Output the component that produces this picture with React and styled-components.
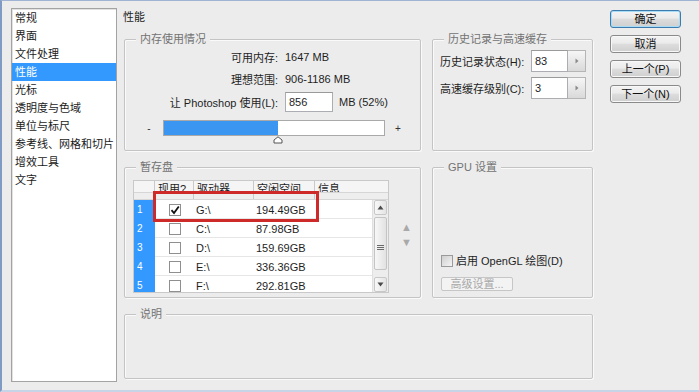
import React from 'react';
import styled, { createGlobalStyle } from 'styled-components';

const Global = createGlobalStyle`
  html, body { margin: 0; padding: 0; background: #ececec; }
  body {
    font-family: "Liberation Sans", "Noto Sans CJK SC", sans-serif;
    font-size: 11px;
    color: #1e1e1e;
  }
  * { box-sizing: border-box; }
`;

const Window = styled.div`
  width: 699px;
  height: 392px;
  display: flex;
  align-items: flex-start;
  background: #ececec;
  border-top: 1px solid #9fb4d2;
  border-left: 2px solid #7f9bc3;
  border-bottom: 2px solid #c5d4e6;
  padding: 7px 0 0 9px;
  overflow: hidden;
`;

const Sidebar = styled.ul`
  list-style: none;
  margin: 0;
  padding: 0;
  width: 106px;
  height: 374px;
  background: #fff;
  border: 1px solid #a3a3a3;
  box-shadow: inset 1px 1px 0 #e2e2e2;
`;

const NavItem = styled.li`
  height: 18px;
  line-height: 18px;
  padding-left: 3px;
  white-space: nowrap;
  color: ${p => (p.$active ? '#fff' : '#1a1a1a')};
  background: ${p => (p.$active ? '#3399ff' : 'transparent')};
`;

const Main = styled.div`
  width: 476px;
  padding-left: 6px;
`;

const Title = styled.div`
  line-height: 18px;
  height: 18px;
`;

const Groups = styled.div`
  margin: 13px 0 0 1px;
  display: grid;
  grid-template-columns: 297px 161px;
  grid-template-rows: 112px 131px 65px;
  column-gap: 11px;
  row-gap: 16px;
`;

const Group = styled.div`
  position: relative;
  border: 1px solid #c4c4c4;
  border-radius: 2px;
  box-shadow: inset 1px 1px 0 #fafafa, 1px 1px 0 #fafafa;
  grid-column: ${p => (p.$span ? '1 / -1' : 'auto')};
`;

const Legend = styled.span`
  position: absolute;
  top: -8px;
  left: 11px;
  padding: 0 4px;
  line-height: 14px;
  background: #ececec;
  color: #737373;
  white-space: nowrap;
`;

const InfoGrid = styled.div`
  display: grid;
  grid-template-columns: 153px auto;
  grid-template-rows: 20px 20px 22px;
  column-gap: 7px;
  row-gap: 2px;
  align-items: center;
  padding-top: 7px;
`;

const Label = styled.span`
  text-align: ${p => (p.$right ? 'right' : 'left')};
  white-space: nowrap;
`;

const InputRow = styled.div`
  display: flex;
  align-items: center;
  gap: 6px;
`;

const TextBox = styled.input`
  width: ${p => p.$w}px;
  height: ${p => p.$h}px;
  border: 1px solid #abadb3;
  border-top-color: #9a9a9a;
  background: #fff;
  padding: 0 3px;
  margin: 0;
  font: inherit;
  color: #1e1e1e;
  outline: none;
`;

const SliderRow = styled.div`
  display: flex;
  align-items: center;
  margin-top: 7px;
  padding-left: 17px;
`;

const Sign = styled.span`
  width: 14px;
  text-align: center;
  color: #333;
  font-size: 10px;
`;

const Track = styled.div`
  position: relative;
  width: 222px;
  height: 16px;
  margin: 0 6px 0 7px;
  border: 1px solid #a9a9a9;
  background: #fff;
`;

const Fill = styled.div`
  height: 100%;
  width: ${p => p.$pct}%;
  background: #3b96f2;
`;

const Thumb = styled.svg`
  position: absolute;
  top: 15px;
  left: calc(${p => p.$pct}% - 5px);
`;

const HistGrid = styled.div`
  display: grid;
  grid-template-columns: 91px 55px;
  grid-auto-rows: 22px;
  row-gap: 5px;
  align-items: center;
  padding: 10px 0 0 7px;
`;

const Spin = styled.div`
  display: flex;
  height: 22px;
`;

const SpinBtn = styled.div`
  width: 18px;
  height: 22px;
  border: 1px solid #b5b5b5;
  border-left: none;
  background: linear-gradient(#f6f6f6, #d9d9d9);
  display: flex;
  align-items: center;
  justify-content: center;
`;

const ScratchBody = styled.div`
  display: flex;
  padding: 12px 0 0 8px;
`;

const Table = styled.div`
  width: 256px;
  border: 1px solid #c9c9c9;
  background: #f3f3f3;
`;

const HeadRow = styled.div`
  display: grid;
  grid-template-columns: 21px 39px 60px 61px 1fr;
  height: ${p => p.$h}px;
  overflow: hidden;
  background: ${p => p.$bg};
  border-bottom: 1px solid #d6d6d6;
`;

const HeadCell = styled.div`
  border-right: 1px solid #c9c9c9;
  padding-left: 3px;
  line-height: 17px;
  white-space: nowrap;
  &:last-child { border-right: none; }
`;

const TBody = styled.div`
  display: flex;
  height: 92px;
  background: #fff;
`;

const Rows = styled.div`
  flex: 1;
  overflow: hidden;
`;

const Row = styled.div`
  display: grid;
  grid-template-columns: 21px 39px 60px 61px 1fr;
  height: 19px;
  align-items: center;
  border-bottom: 1px solid #e6e6e6;
`;

const NumCell = styled.div`
  height: 100%;
  background: #3399ff;
  color: #fff;
  padding-left: 3px;
  line-height: 19px;
  font-size: 10px;
`;

const CheckCell = styled.div`
  display: flex;
  justify-content: center;
`;

const Box = styled.div`
  width: 12px;
  height: 12px;
  border: 1px solid ${p => (p.$shaded ? '#9a9a9a' : '#8f8f8f')};
  background: ${p => (p.$shaded ? 'linear-gradient(135deg, #cfcfcf, #f4f4f4)' : '#fff')};
  display: flex;
  align-items: center;
  justify-content: center;
`;

const Cell = styled.div`
  padding-left: 2px;
  white-space: nowrap;
`;

const Scrollbar = styled.div`
  width: 16px;
  display: flex;
  flex-direction: column;
  background: #ededed;
  border-left: 1px solid #e0e0e0;
`;

const ScrollBtn = styled.div`
  height: 15px;
  margin: 0 1px;
  border: 1px solid #c8c8c8;
  border-radius: 2px;
  background: linear-gradient(90deg, #f8f8f8, #e4e4e4);
  display: flex;
  align-items: center;
  justify-content: center;
`;

const ScrollThumb = styled.div`
  margin: 2px 1px 0;
  height: 53px;
  border: 1px solid #c4c4c4;
  border-radius: 2px;
  background: linear-gradient(90deg, #f7f7f7, #e2e2e2);
  display: flex;
  align-items: flex-end;
  justify-content: center;
  padding-bottom: 18px;
`;

const Track2 = styled.div`
  flex: 1;
`;

const Movers = styled.div`
  display: flex;
  flex-direction: column;
  padding: 40px 0 0 12px;
  color: #a9a9a9;
  font-size: 11px;
  line-height: 15px;
`;

const RedMark = styled.div`
  position: absolute;
  left: 28px;
  top: 23px;
  width: 166px;
  height: 31px;
  border: 3px solid #cf2a2a;
`;

const GpuBody = styled.div`
  height: 100%;
  display: flex;
  flex-direction: column;
  justify-content: flex-end;
  padding: 0 0 6px 8px;
`;

const CheckRow = styled.div`
  display: flex;
  align-items: center;
  gap: 3px;
  line-height: 14px;
`;

const AdvButton = styled.div`
  margin-top: 9px;
  width: 72px;
  height: 14px;
  line-height: 12px;
  border: 1px solid #c6c6c6;
  border-radius: 2px;
  background: #f3f3f3;
  color: #a8a8a8;
  text-align: center;
`;

const Buttons = styled.div`
  display: flex;
  flex-direction: column;
  gap: 7px;
  margin: 2px 0 0 17px;
`;

const Button = styled.div`
  width: 71px;
  height: 18px;
  line-height: 16px;
  text-align: center;
  border: 1px solid ${p => (p.$default ? '#3d7bad' : '#8a8a8a')};
  border-radius: 3px;
  background: linear-gradient(#f3f3f3 0%, #ebebeb 45%, #dddddd 50%, #cfcfcf 100%);
  box-shadow: inset 0 0 0 1px ${p => (p.$default ? '#a6dcf6' : '#f8f8f8')};
  color: #111;
`;

const Arrow = ({ dir }) => (
  <svg width="7" height="5" viewBox="0 0 7 5">
    <path d={dir === 'up' ? 'M0.5 4.5 L3.5 0.5 L6.5 4.5 Z' : 'M0.5 0.5 L3.5 4.5 L6.5 0.5 Z'} fill="#4a4a4a" />
  </svg>
);

const navItems = ['常规', '界面', '文件处理', '性能', '光标', '透明度与色域', '单位与标尺', '参考线、网格和切片', '增效工具', '文字'];

const disks = [
  { n: 1, on: true, d: 'G:\\', s: '194.49GB' },
  { n: 2, on: false, d: 'C:\\', s: '87.98GB' },
  { n: 3, on: false, d: 'D:\\', s: '159.69GB' },
  { n: 4, on: false, d: 'E:\\', s: '336.36GB' },
  { n: 5, on: false, d: 'F:\\', s: '292.81GB' },
];

const Check = () => (
  <svg width="10" height="10" viewBox="0 0 10 10">
    <path d="M1.5 5.2 L4 8 L8.8 1.5" stroke="#111" strokeWidth="1.8" fill="none" />
  </svg>
);

export default function App() {
  const pct = 52;
  return (
    <Window>
      <Global />
      <Sidebar>
        {navItems.map(t => (
          <NavItem key={t} $active={t === '性能'}>{t}</NavItem>
        ))}
      </Sidebar>

      <Main>
        <Title>性能</Title>
        <Groups>
          <Group>
            <Legend>内存使用情况</Legend>
            <InfoGrid>
              <Label $right>可用内存:</Label>
              <Label>1647 MB</Label>
              <Label $right>理想范围:</Label>
              <Label>906-1186 MB</Label>
              <Label $right>让 Photoshop 使用(L):</Label>
              <InputRow>
                <TextBox $w={48} $h={20} readOnly value="856" />
                <Label>MB (52%)</Label>
              </InputRow>
            </InfoGrid>
            <SliderRow>
              <Sign>-</Sign>
              <Track>
                <Fill $pct={pct} />
                <Thumb $pct={pct} width="10" height="8" viewBox="0 0 10 8">
                  <path d="M1 7 L1 4 L5 0.8 L9 4 L9 7 Z" fill="#fff" stroke="#555" strokeWidth="1" />
                </Thumb>
              </Track>
              <Sign>+</Sign>
            </SliderRow>
          </Group>

          <Group>
            <Legend>历史记录与高速缓存</Legend>
            <HistGrid>
              <Label>历史记录状态(H):</Label>
              <Spin>
                <TextBox $w={37} $h={22} readOnly value="83" />
                <SpinBtn>
                  <svg width="4" height="6" viewBox="0 0 4 6"><path d="M0.5 0.5 L3.5 3 L0.5 5.5 Z" fill="#8a8a8a" /></svg>
                </SpinBtn>
              </Spin>
              <Label>高速缓存级别(C):</Label>
              <Spin>
                <TextBox $w={37} $h={22} readOnly value="3" />
                <SpinBtn>
                  <svg width="4" height="6" viewBox="0 0 4 6"><path d="M0.5 0.5 L3.5 3 L0.5 5.5 Z" fill="#8a8a8a" /></svg>
                </SpinBtn>
              </Spin>
            </HistGrid>
          </Group>

          <Group>
            <Legend>暂存盘</Legend>
            <ScratchBody>
              <Table>
                <HeadRow $h={12} $bg="#f5f5f5">
                  <HeadCell />
                  <HeadCell>现用?</HeadCell>
                  <HeadCell>驱动器</HeadCell>
                  <HeadCell>空闲空间</HeadCell>
                  <HeadCell>信息</HeadCell>
                </HeadRow>
                <HeadRow $h={7} $bg="#eeeeee">
                  <HeadCell />
                  <HeadCell />
                  <HeadCell />
                  <HeadCell />
                  <HeadCell />
                </HeadRow>
                <TBody>
                  <Rows>
                    {disks.map(r => (
                      <Row key={r.n}>
                        <NumCell>{r.n}</NumCell>
                        <CheckCell>
                          <Box>{r.on && <Check />}</Box>
                        </CheckCell>
                        <Cell>{r.d}</Cell>
                        <Cell>{r.s}</Cell>
                        <Cell />
                      </Row>
                    ))}
                  </Rows>
                  <Scrollbar>
                    <ScrollBtn><Arrow dir="up" /></ScrollBtn>
                    <ScrollThumb>
                      <svg width="7" height="6" viewBox="0 0 7 6">
                        <path d="M0 0.5 H7 M0 2.5 H7 M0 4.5 H7" stroke="#6a6a6a" strokeWidth="1" />
                      </svg>
                    </ScrollThumb>
                    <Track2 />
                    <ScrollBtn><Arrow dir="down" /></ScrollBtn>
                  </Scrollbar>
                </TBody>
              </Table>
              <Movers>
                <span>▲</span>
                <span>▼</span>
              </Movers>
            </ScratchBody>
            <RedMark />
          </Group>

          <Group>
            <Legend>GPU 设置</Legend>
            <GpuBody>
              <CheckRow>
                <Box $shaded />
                <span>启用 OpenGL 绘图(D)</span>
              </CheckRow>
              <AdvButton>高级设置...</AdvButton>
            </GpuBody>
          </Group>

          <Group $span>
            <Legend>说明</Legend>
          </Group>
        </Groups>
      </Main>

      <Buttons>
        <Button $default>确定</Button>
        <Button>取消</Button>
        <Button>上一个(P)</Button>
        <Button>下一个(N)</Button>
      </Buttons>
    </Window>
  );
}
